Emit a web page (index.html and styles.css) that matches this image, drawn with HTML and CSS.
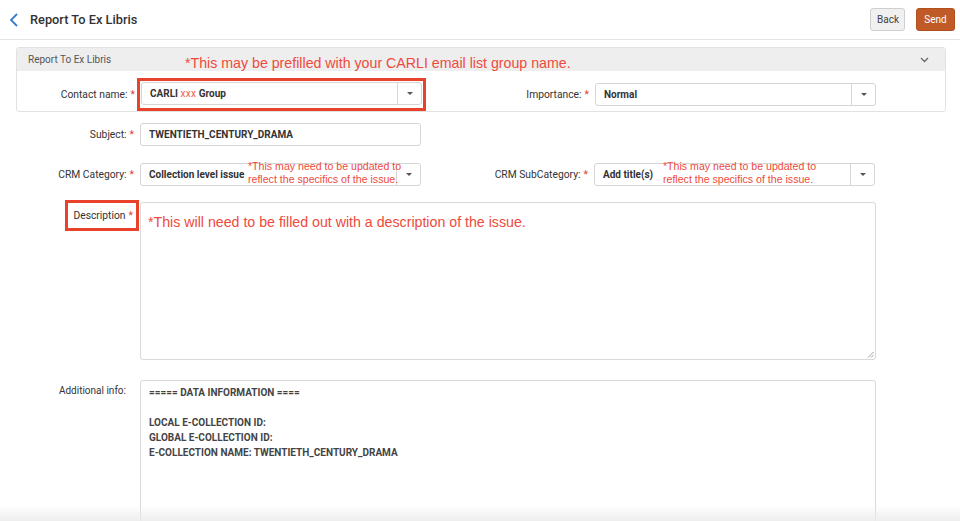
FILE: index.html
```html
<!DOCTYPE html>
<html>
<head>
<meta charset="utf-8">
<link rel="stylesheet" href="styles.css">
</head>
<body>
<header class="topbar">
  <div class="title-wrap">
    <svg class="back-icon" width="10" height="14" viewBox="0 0 10 14"><polyline points="8,1 2,7 8,13" fill="none" stroke="#3a7bc8" stroke-width="1.8"/></svg>
    <h1 class="title">Report To Ex Libris</h1>
  </div>
  <div class="actions">
    <button class="btn btn-back">Back</button>
    <button class="btn btn-send">Send</button>
  </div>
</header>

<main class="content">
  <section class="panel">
    <div class="panel-head">
      <span class="panel-title">Report To Ex Libris</span>
      <span class="note note-big note-panel">*This may be prefilled with your CARLI email list group name.</span>
      <svg class="panel-chev" width="9" height="6" viewBox="0 0 9 6"><polyline points="1,1 4.5,4.5 8,1" fill="none" stroke="#666" stroke-width="1.3"/></svg>
    </div>
    <div class="row row-panel">
      <label class="lbl lbl-left">Contact name:<span class="req">*</span></label>
      <div class="redbox">
        <div class="select">
          <span class="val">CARLI <span class="xxx">xxx</span> Group</span>
          <span class="caret-cell"><span class="caret"></span></span>
        </div>
      </div>
      <label class="lbl lbl-right lbl-right-panel">Importance:<span class="req">*</span></label>
      <div class="select">
        <span class="val">Normal</span>
        <span class="caret-cell"><span class="caret"></span></span>
      </div>
    </div>
  </section>

  <div class="row row-subject">
    <label class="lbl lbl-left">Subject:<span class="req">*</span></label>
    <div class="input"><span class="val">TWENTIETH_CENTURY_DRAMA</span></div>
  </div>

  <div class="row row-crm">
    <label class="lbl lbl-left">CRM Category:<span class="req">*</span></label>
    <div class="select">
      <span class="val">Collection level issue</span>
      <span class="note note-small note-cat">*This may need to be updated to<br>reflect the specifics of the issue.</span>
      <span class="caret-cell"><span class="caret"></span></span>
    </div>
    <label class="lbl lbl-right">CRM SubCategory:<span class="req">*</span></label>
    <div class="select">
      <span class="val">Add title(s)</span>
      <span class="note note-small note-sub">*This may need to be updated to<br>reflect the specifics of the issue.</span>
      <span class="caret-cell"><span class="caret"></span></span>
    </div>
  </div>

  <div class="row row-desc">
    <div class="lbl-left lbl-desc-cell">
      <span class="desc-box">Description<span class="req">*</span></span>
    </div>
    <div class="textarea textarea-desc">
      <span class="note note-big">*This will need to be filled out with a description of the issue.</span>
      <svg class="grip" width="7" height="7" viewBox="0 0 7 7"><line x1="6.5" y1="1" x2="1" y2="6.5" stroke="#888" stroke-width="0.8"/><line x1="6.5" y1="4" x2="4" y2="6.5" stroke="#888" stroke-width="0.8"/></svg>
    </div>
  </div>

  <div class="row row-info">
    <label class="lbl lbl-left lbl-top">Additional info:</label>
    <div class="textarea textarea-info">
      <div class="info-line">===== DATA INFORMATION ====</div>
      <div class="info-line">&nbsp;</div>
      <div class="info-line">LOCAL E-COLLECTION ID:</div>
      <div class="info-line">GLOBAL E-COLLECTION ID:</div>
      <div class="info-line">E-COLLECTION NAME: TWENTIETH_CENTURY_DRAMA</div>
    </div>
  </div>
</main>
<div class="bottom-fade"></div>
</body>
</html>
```

FILE: styles.css
```css
* { box-sizing: border-box; }
html, body { margin: 0; padding: 0; }
body {
  font-family: Roboto, "Liberation Sans", Arial, sans-serif;
  color: #333;
  background: #fff;
  width: 960px;
  height: 521px;
  overflow: hidden;
}

.topbar {
  height: 40px;
  border-bottom: 1px solid #e4e4e4;
  display: flex;
  align-items: center;
  justify-content: space-between;
  padding: 0 5px 0 9px;
}
.title-wrap { display: flex; align-items: center; gap: 11px; }
.back-icon { display: block; }
.title {
  margin: 0;
  font-size: 12.8px;
  font-weight: 500;
  color: #333;
}
.actions { display: flex; gap: 11px; }
.btn {
  font-family: Roboto, "Liberation Sans", Arial, sans-serif;
  font-size: 10px;
  height: 23px;
  border-radius: 3px;
  padding: 0 6px;
  cursor: pointer;
}
.btn-back {
  background: #f0f0f0;
  border: 1px solid #cfcfcf;
  color: #444;
  width: 35px;
}
.btn-send {
  background: #c05a26;
  border: 1px solid #b24f1c;
  color: #fff;
  width: 39px;
}

.content {
  padding: 7px 14px 0 16px;
}

.panel {
  border: 1px solid #e2e2e2;
  border-radius: 3px;
  width: 930px;
}
.panel-head {
  position: relative;
  height: 23px;
  background: #eeeeee;
  display: flex;
  align-items: center;
  justify-content: space-between;
  padding: 0 16px 0 11px;
  border-radius: 2px 2px 0 0;
}
.panel-title { font-size: 10px; color: #555; }
.panel-chev { display: block; margin-top: 1px; }

.note {
  color: #ee4a3c;
  font-family: "Liberation Sans", Arial, sans-serif;
  white-space: nowrap;
}
.note-big { font-size: 14.2px; }
.note-panel {
  position: absolute;
  left: 168px;
  top: 7px;
}
.note-small {
  font-size: 10.6px;
  line-height: 12.5px;
  position: absolute;
  top: -4px;
}
.note-cat { left: 107px; }
.note-sub { left: 68px; }

.row {
  display: flex;
  align-items: center;
}
.row-panel {
  padding: 7px 0 0 0;
}
.lbl {
  font-size: 10.3px;
  color: #333;
  text-align: right;
  white-space: nowrap;
}
.lbl-left {
  width: 124px;
  flex: 0 0 124px;
  padding-right: 6px;
}
.lbl-right {
  width: 173px;
  flex: 0 0 173px;
  padding-right: 6px;
}
.lbl-right-panel {
  width: 169px;
  flex-basis: 169px;
}
.req { color: #e0402e; margin-left: 3px; }

.redbox {
  border: 3px solid #e8432a;
  padding: 1px 1px 3px 1px;
  margin-left: -4px;
}

.select, .input {
  position: relative;
  width: 281px;
  height: 23px;
  border: 1px solid #d6d6d6;
  border-radius: 3px;
  background: #fff;
  display: flex;
  align-items: center;
  padding-left: 8px;
}
.val {
  font-size: 10px;
  font-weight: 700;
  color: #333;
  white-space: nowrap;
}
.xxx { color: #f05a4a; font-weight: 400; letter-spacing: 0.3px; }
.caret-cell {
  margin-left: auto;
  width: 24px;
  height: 100%;
  border-left: 1px solid #d6d6d6;
  display: flex;
  align-items: center;
  justify-content: center;
}
.caret {
  width: 0;
  height: 0;
  border-left: 3px solid transparent;
  border-right: 3px solid transparent;
  border-top: 3px solid #555;
}

.row-subject { margin-top: 11px; }
.row-crm { margin-top: 17px; }
.row-desc { margin-top: 16px; align-items: flex-start; }
.row-info { margin-top: 20px; align-items: flex-start; }

.lbl-desc-cell {
  display: flex;
  justify-content: flex-end;
  padding-right: 1px;
  margin-top: -2px;
}
.desc-box {
  border: 3px solid #e8432a;
  font-size: 10.3px;
  height: 31px;
  display: flex;
  align-items: center;
  padding: 0 3px 0 5px;
  white-space: nowrap;
}

.textarea {
  position: relative;
  width: 736px;
  border: 1px solid #d9d9d9;
  border-radius: 3px;
  background: #fff;
}
.textarea-desc {
  height: 158px;
  padding: 9px 0 0 7px;
}
.grip { position: absolute; right: 1px; bottom: 1px; }
.textarea-info {
  height: 160px;
  padding: 4px 8px;
}
.info-line {
  font-size: 10px;
  font-weight: 700;
  color: #444;
  line-height: 15px;
}
.lbl-top { padding-top: 5px; padding-right: 14px; font-size: 10px; }

.bottom-fade {
  position: fixed;
  left: 0;
  right: 0;
  bottom: 0;
  height: 16px;
  background: linear-gradient(to bottom, rgba(240,240,240,0), rgba(236,236,236,0.9));
  pointer-events: none;
}
```
